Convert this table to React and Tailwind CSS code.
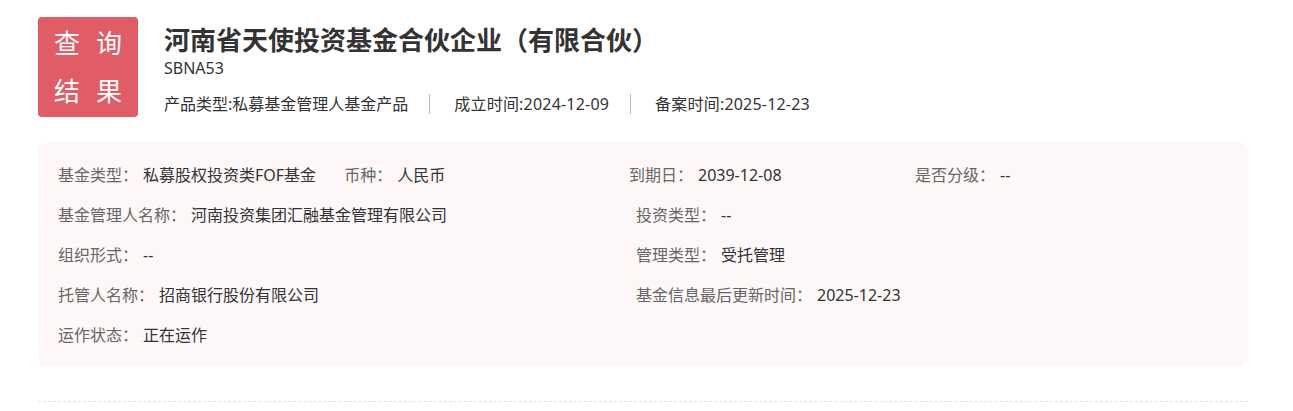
export default function App() {
  const Label = ({ children }) => <span className="text-[#666]">{children}</span>;
  const Value = ({ children }) => <span className="ml-[5px] text-[#333]">{children}</span>;
  return (
    <div className="min-h-[411px] bg-white pl-[38px] pt-[17px] font-['Noto_Sans','Noto_Sans_CJK_SC',sans-serif]">
      <div className="w-[1210px]">
        <div className="flex">
          <div className="flex h-[100px] w-[100px] flex-col items-center justify-center rounded-[4px] bg-[#e05c66] text-[26px] leading-[48px] text-white">
            <div className="flex gap-[16px]">
              <span>查</span>
              <span>询</span>
            </div>
            <div className="flex gap-[16px]">
              <span>结</span>
              <span>果</span>
            </div>
          </div>
          <div className="ml-[26px] flex flex-col">
            <div className="mt-[8px] text-[26px] font-bold leading-[30px] text-[#333]">
              河南省天使投资基金合伙企业（有限合伙）
            </div>
            <div className="mt-[3px] text-[16px] leading-[20px] text-[#333]">SBNA53</div>
            <div className="mt-[14px] flex items-center text-[16px] leading-[24px] text-[#333]">
              <span>产品类型:私募基金管理人基金产品</span>
              <span className="ml-[21px] mr-[24px] h-[20px] w-px bg-[#bbb]"></span>
              <span className="tracking-[0.2px]">成立时间:2024-12-09</span>
              <span className="ml-[21px] mr-[24px] h-[20px] w-px bg-[#bbb]"></span>
              <span className="tracking-[0.2px]">备案时间:2025-12-23</span>
            </div>
          </div>
        </div>

        <div className="mt-[26px] rounded-[8px] bg-[#fdf7f7] pb-[11px] pl-[20px] pt-[12px] text-[16px]">
          <div className="flex h-[40px] items-center">
            <div className="flex w-[571px] items-center">
              <Label>基金类型：</Label>
              <Value>私募股权投资类FOF基金</Value>
              <span className="ml-[28px]">
                <Label>币种：</Label>
              </span>
              <Value>人民币</Value>
            </div>
            <div className="flex w-[286px] items-center">
              <Label>到期日：</Label>
              <Value>2039-12-08</Value>
            </div>
            <div className="flex items-center">
              <Label>是否分级：</Label>
              <Value>--</Value>
            </div>
          </div>
          <div className="flex h-[40px] items-center">
            <div className="flex w-[578px] items-center">
              <Label>基金管理人名称：</Label>
              <Value>河南投资集团汇融基金管理有限公司</Value>
            </div>
            <div className="flex items-center">
              <Label>投资类型：</Label>
              <Value>--</Value>
            </div>
          </div>
          <div className="flex h-[40px] items-center">
            <div className="flex w-[578px] items-center">
              <Label>组织形式：</Label>
              <Value>--</Value>
            </div>
            <div className="flex items-center">
              <Label>管理类型：</Label>
              <Value>受托管理</Value>
            </div>
          </div>
          <div className="flex h-[40px] items-center">
            <div className="flex w-[578px] items-center">
              <Label>托管人名称：</Label>
              <Value>招商银行股份有限公司</Value>
            </div>
            <div className="flex items-center">
              <Label>基金信息最后更新时间：</Label>
              <Value>2025-12-23</Value>
            </div>
          </div>
          <div className="flex h-[40px] items-center">
            <div className="flex items-center">
              <Label>运作状态：</Label>
              <Value>正在运作</Value>
            </div>
          </div>
        </div>

        <div className="mt-[35px] border-t border-dashed border-[#e3e3e3]"></div>
      </div>
    </div>
  );
}
